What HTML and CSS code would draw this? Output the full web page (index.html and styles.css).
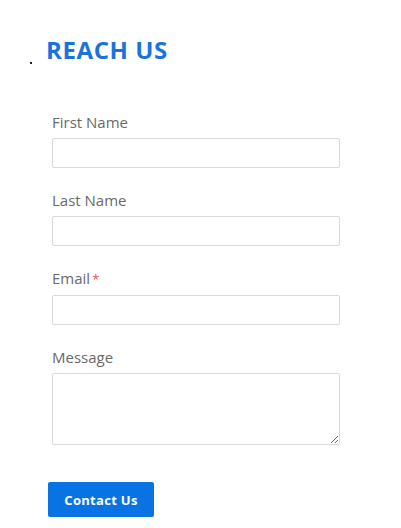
FILE: index.html
```html
<!DOCTYPE html>
<html lang="en">
<head>
    <meta charset="UTF-8">
    <meta name="viewport" content="width=device-width, initial-scale=1.0">
    <title>Reach Us</title>
    <link rel="stylesheet" href="styles.css">
</head>
<body>
    <div class="contact">
        <div class="contact-head">
            <span class="dot"></span>
            <h2>REACH US</h2>
        </div>

        <form class="contact-form">
            <div class="field">
                <label for="first-name">First Name</label>
                <input type="text" id="first-name">
            </div>
            <div class="field">
                <label for="last-name">Last Name</label>
                <input type="text" id="last-name">
            </div>
            <div class="field">
                <label for="email">Email<span class="req">*</span></label>
                <input type="email" id="email">
            </div>
            <div class="field">
                <label for="message">Message</label>
                <textarea id="message"></textarea>
            </div>
            <button type="button">Contact Us</button>
        </form>
    </div>
</body>
</html>
```

FILE: styles.css
```css
body {
    margin: 0;
    font-family: 'Open Sans', 'Liberation Sans', sans-serif;
    background: #ffffff;
}

.contact {
    padding: 36px 0 0 30px;
}

.contact-head {
    display: flex;
    align-items: flex-end;
    gap: 15px;
}

.dot {
    width: 2px;
    height: 2px;
    background: #222;
}

h2 {
    margin: 0 0 0 -1px;
    font-size: 24px;
    line-height: 28px;
    font-weight: 700;
    letter-spacing: 0.6px;
    color: #1a73dc;
}

.contact-form {
    padding: 48px 0 0 18px;
    width: 292px;
}

.field {
    padding-left: 4px;
    margin-bottom: 22px;
}

label {
    display: block;
    font-size: 15px;
    line-height: 20px;
    color: #6a6a6a;
    margin-bottom: 6px;
}

.req {
    color: #d9534f;
    font-size: 13px;
    margin-left: 2px;
}

input,
textarea {
    display: block;
    width: 288px;
    height: 30px;
    box-sizing: border-box;
    border: 1px solid #dadada;
    border-radius: 2px;
    font-family: inherit;
    font-size: 14px;
    padding: 4px 8px;
}

textarea {
    height: 72px;
}

button {
    margin-top: 15px;
    width: 106px;
    height: 35px;
    background: #0a73e3;
    color: #fff;
    border: none;
    border-radius: 2px;
    font-family: inherit;
    font-size: 13px;
    font-weight: 700;
    letter-spacing: 0.3px;
    cursor: pointer;
}
```
